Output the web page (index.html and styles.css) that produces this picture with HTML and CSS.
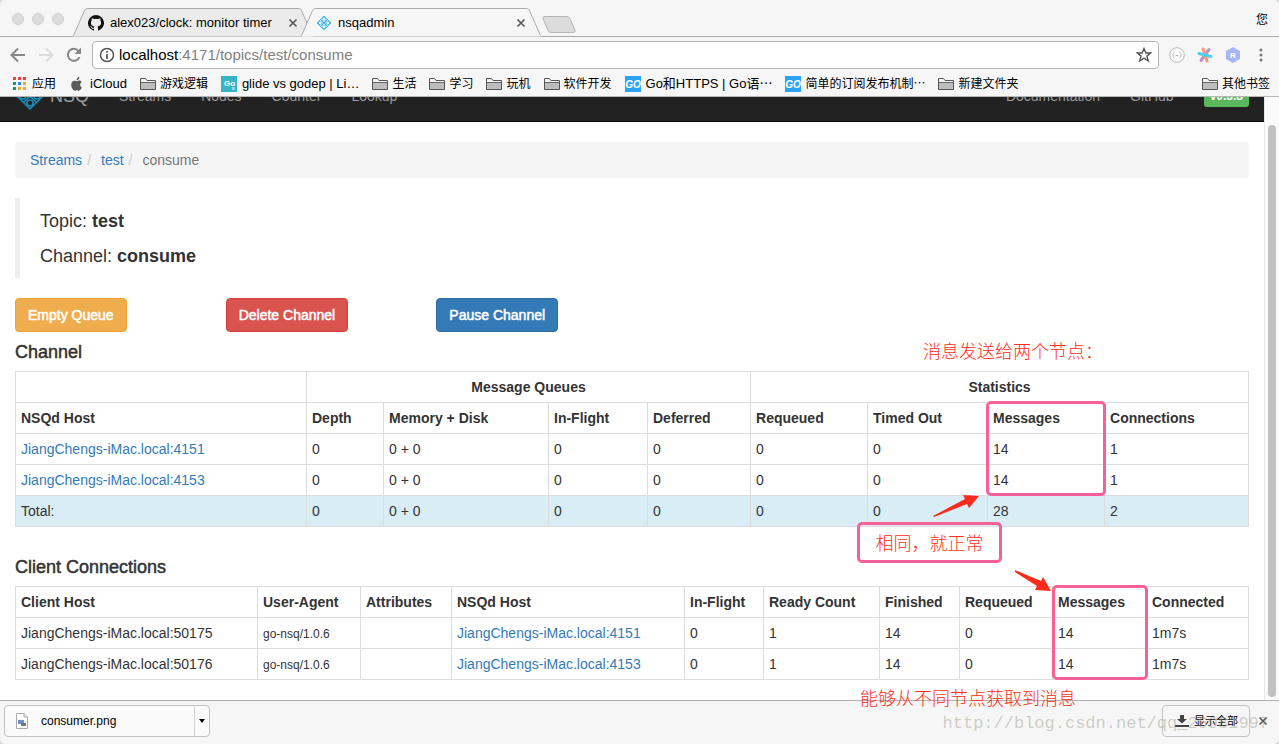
FILE: index.html
```html
<!DOCTYPE html>
<html lang="zh-CN">
<head>
  <meta charset="UTF-8" />
  <meta name="viewport" content="width=device-width, initial-scale=1.0"/>
  <title>nsqadmin</title>
  <link rel="stylesheet" href="styles.css">
</head>
<body>
  <!-- shared icons -->
  <svg class="sprite" aria-hidden="true">
    <symbol id="folder" viewBox="0 0 16 16">
      <path d="M.5 13.500V2.500H5.500L7 4.500H15.500V13.500Z" fill="#f4f4f4" stroke="#555"/>
      <path d="M1 6.500H15V13H1Z" fill="#bdbdbd"/>
      <path d="M1 6.500H15" stroke="#666"/>
    </symbol>
    <symbol id="nsq" viewBox="0 0 16 16">
      <path d="M8 1L15 8L8 15L1 8ZM4.500 4.500L11.500 11.500M11.500 4.500L4.500 11.500M1 8H15" fill="none" stroke="#3db8ea" stroke-width="1"/>
      <g fill="#fff" stroke="#5cc8f2"><circle cx="8" cy="4.200" r="1.800"/><circle cx="4.200" cy="8" r="1.800"/><circle cx="11.800" cy="8" r="1.800"/><circle cx="8" cy="11.800" r="1.800"/></g>
    </symbol>
    <symbol id="close" viewBox="0 0 10 10">
      <path d="M1.500 1.500L8.500 8.500M8.500 1.500L1.500 8.500" stroke="#5a5a5a" stroke-width="1.700"/>
    </symbol>
    <symbol id="tab-shape" viewBox="0 0 242 37">
      <path d="M0 36.500C1 36.500 1.500 35.500 2 34.500L12.500 10.500Q13.500 8.500 15.500 8.500H226.500Q228.500 8.500 229.500 10.500L240 34.500C240.500 35.500 241 36.500 242 36.500"/>
    </symbol>
  </svg>

  <div class="window">
    <div class="tabstrip">
      <div class="lights"><i></i><i></i><i></i></div>
      <div class="tab">
        <svg class="tab-bg"><use href="#tab-shape"/></svg>
        <svg class="favicon" viewBox="0 0 16 16"><path fill="#111" d="M8 0a8 8 0 0 0-2.530 15.590c.4.070.55-.17.550-.38v-1.490c-2.230.48-2.700-.95-2.700-.95-.36-.92-.89-1.170-.89-1.170-.73-.5.060-.49.060-.49.800.060 1.230.83 1.230.83.710 1.220 1.870.87 2.330.66.070-.52.280-.87.510-1.070-1.780-.2-3.640-.89-3.640-3.950 0-.87.310-1.590.820-2.150-.08-.2-.36-1.020.080-2.120 0 0 .67-.21 2.200.82a7.600 7.600 0 0 1 4 0c1.530-1.040 2.200-.82 2.200-.82.440 1.100.160 1.920.080 2.120.510.560.820 1.270.820 2.150 0 3.070-1.870 3.750-3.650 3.950.290.250.540.730.540 1.480v2.190c0 .21.150.46.550.38A8 8 0 0 0 8 0"/></svg>
        <span class="tab-title">alex023/clock: monitor timer</span>
        <button class="tab-close" aria-label="关闭"><svg><use href="#close"/></svg></button>
      </div>
      <div class="tab active">
        <svg class="tab-bg"><use href="#tab-shape"/></svg>
        <svg class="favicon"><use href="#nsq"/></svg>
        <span class="tab-title">nsqadmin</span>
        <button class="tab-close" aria-label="关闭"><svg><use href="#close"/></svg></button>
      </div>
      <button class="new-tab" aria-label="新标签页"><svg viewBox="0 0 34 17"><path d="M3 .5H25Q27 .5 28 2.500L33 14.500Q33.500 16.500 31.500 16.500H9Q7 16.500 6 14.500L1 2.500Q.5 .5 3 .5Z" fill="#dcdcdc" stroke="#b5b5b5"/></svg></button>
      <button class="profile">您</button>
    </div>

    <div class="toolbar">
      <button class="tool" aria-label="后退"><svg viewBox="0 0 16 16"><path d="M15 8H2M8 1.500L1.500 8L8 14.500" fill="none" stroke="#888" stroke-width="2"/></svg></button>
      <button class="tool" aria-label="前进"><svg viewBox="0 0 16 16"><path d="M1 8H14M8 1.500L14.500 8L8 14.500" fill="none" stroke="#dcdcdc" stroke-width="2"/></svg></button>
      <button class="tool" aria-label="重新加载"><svg viewBox="0 0 16 16"><path d="M13.500 10A6 6 0 1 1 12.500 4" fill="none" stroke="#888" stroke-width="2"/><path d="M15 .5V7H8.500Z" fill="#888"/></svg></button>
      <div class="address">
        <svg class="info" viewBox="0 0 16 16"><circle cx="8" cy="8" r="6.500" fill="none" stroke="#555" stroke-width="1.500"/><path d="M8 7V12M8 4V5.700" stroke="#555" stroke-width="1.700"/></svg>
        <span class="url"><b>localhost</b>:4171/topics/test/consume</span>
        <svg class="star" viewBox="0 0 16 16"><path d="M8 1.500L9.900 6H14.700L10.900 9.100L12.300 14L8 11.200L3.700 14L5.100 9.100L1.300 6H6.100Z" fill="none" stroke="#555" stroke-width="1.400"/></svg>
      </div>
      <div class="extensions">
        <svg viewBox="0 0 16 16"><circle cx="8" cy="8" r="7.300" fill="#fcfcfc" stroke="#bbb"/><path d="M5.500 5Q4.500 5 4.500 6.500T3.500 8Q4.500 8 4.500 9.500T5.500 11M10.500 5Q11.500 5 11.500 6.500T12.500 8Q11.500 8 11.500 9.500T10.500 11M6.500 8.500H9.500" fill="none" stroke="#bbb"/></svg>
        <svg viewBox="0 0 16 16" stroke-width="3" stroke-linecap="round"><path d="M12 2.500L4 13.500" stroke="#b894cf"/><path d="M6 2L10 14" stroke="#ff9b71"/><path d="M2 6.500L14 9.500" stroke="#4fd0ee"/></svg>
        <svg viewBox="0 0 16 16"><path d="M8 0L15 4V12L8 16L1 12V4Z" fill="#a9b4f4"/><text x="8" y="11" text-anchor="middle" class="ext-letter">R</text></svg>
        <svg viewBox="0 0 16 16" fill="#777"><circle cx="8" cy="3" r="1.500"/><circle cx="8" cy="8" r="1.500"/><circle cx="8" cy="13" r="1.500"/></svg>
      </div>
    </div>

    <nav class="bookmarks">
      <a href="#" class="apps"><svg viewBox="0 0 14 14"><path fill="#ea4335" d="M0 0h3v3H0zM5 0h3v3H5zM10 0h3v3h-3z"/><path fill="#129c57" d="M0 5h3v3H0zM0 10h3v3H0z"/><path fill="#2f86f0" d="M5 5h3v3H5z"/><path fill="#f9a72b" d="M10 5h3v3h-3zM5 10h3v3H5zM10 10h3v3h-3z"/></svg>应用</a>
      <a href="#" class="latin"><svg viewBox="0 0 16 16"><path fill="#5a5a5a" d="M10.500 1C10.600 2.800 9 4.300 7.600 4.200C7.400 2.600 9 1.100 10.500 1ZM12.900 11.300C12.300 12.900 11.100 14.700 10 14.700C9.200 14.700 8.900 14.200 7.900 14.200S6.600 14.700 5.800 14.700C4.300 14.700 2.200 11.600 2.200 8.700C2.200 6 3.900 4.700 5.500 4.700C6.500 4.700 7.300 5.300 7.900 5.300S9.500 4.600 10.700 4.600C11.500 4.700 12.300 5.100 12.800 5.900C10.500 7.200 10.900 10.500 12.900 11.300Z"/></svg>iCloud</a>
      <a href="#"><svg><use href="#folder"/></svg>游戏逻辑</a>
      <a href="#" class="latin"><svg viewBox="0 0 16 16"><path d="M0 0H16V16H0Z" fill="#38b4c9"/><path d="M11 11h3v3h-3z" fill="#83d5e2"/><text x="3" y="10" class="go-letter">Go</text></svg>glide vs godep | Li…</a>
      <a href="#"><svg><use href="#folder"/></svg>生活</a>
      <a href="#"><svg><use href="#folder"/></svg>学习</a>
      <a href="#"><svg><use href="#folder"/></svg>玩机</a>
      <a href="#"><svg><use href="#folder"/></svg>软件开发</a>
      <a href="#" class="latin"><svg viewBox="0 0 16 16"><path d="M0 0H16V16H0Z" fill="#2ba4f5"/><text x="8" y="12" text-anchor="middle" class="go-big">GO</text></svg>Go和HTTPS | Go语⋯</a>
      <a href="#"><svg viewBox="0 0 16 16"><path d="M0 0H16V16H0Z" fill="#2ba4f5"/><text x="8" y="12" text-anchor="middle" class="go-big">GO</text></svg>简单的订阅发布机制⋯</a>
      <a href="#"><svg><use href="#folder"/></svg>新建文件夹</a>
      <a href="#" class="other"><svg><use href="#folder"/></svg>其他书签</a>
    </nav>

    <div class="viewport">
      <div class="page">
        <nav class="navbar">
          <a href="#" class="brand">
            <svg viewBox="0 0 30 30"><path d="M15 2L28 15L15 28L2 15ZM8.500 8.500L21.500 21.500M21.500 8.500L8.500 21.500" fill="none" stroke="#1c8fc0" stroke-width="1.500"/><g fill="#222" stroke="#1c8fc0" stroke-width="1.500"><circle cx="15" cy="8" r="3"/><circle cx="8" cy="15" r="3"/><circle cx="22" cy="15" r="3"/><circle cx="15" cy="22" r="3"/></g></svg>
            NSQ
          </a>
          <a href="#">Streams</a>
          <a href="#">Nodes</a>
          <a href="#">Counter</a>
          <a href="#">Lookup</a>
          <a href="#" class="push">Documentation</a>
          <a href="#">GitHub</a>
          <span class="version">v0.3.8</span>
        </nav>

        <main class="container">
          <ol class="breadcrumb">
            <li><a href="#">Streams</a></li>
            <li><a href="#">test</a></li>
            <li class="current">consume</li>
          </ol>

          <blockquote>
            <p>Topic: <strong>test</strong></p>
            <p>Channel: <strong>consume</strong></p>
          </blockquote>

          <div class="actions">
            <div><button class="btn btn-warning">Empty Queue</button></div>
            <div><button class="btn btn-danger">Delete Channel</button></div>
            <div><button class="btn btn-primary">Pause Channel</button></div>
          </div>

          <h4>Channel</h4>
          <table class="channel-table">
            <colgroup><col><col><col><col><col><col><col><col><col></colgroup>
            <thead>
              <tr><th></th><th colspan="4" class="center">Message Queues</th><th colspan="4" class="center">Statistics</th></tr>
              <tr><th>NSQd Host</th><th>Depth</th><th>Memory + Disk</th><th>In-Flight</th><th>Deferred</th><th>Requeued</th><th>Timed Out</th><th>Messages</th><th>Connections</th></tr>
            </thead>
            <tbody>
              <tr><td><a href="#">JiangChengs-iMac.local:4151</a></td><td>0</td><td>0 + 0</td><td>0</td><td>0</td><td>0</td><td>0</td><td>14</td><td>1</td></tr>
              <tr><td><a href="#">JiangChengs-iMac.local:4153</a></td><td>0</td><td>0 + 0</td><td>0</td><td>0</td><td>0</td><td>0</td><td>14</td><td>1</td></tr>
              <tr class="total"><td>Total:</td><td>0</td><td>0 + 0</td><td>0</td><td>0</td><td>0</td><td>0</td><td>28</td><td>2</td></tr>
            </tbody>
          </table>

          <h4>Client Connections</h4>
          <table class="client-table">
            <colgroup><col><col><col><col><col><col><col><col><col><col></colgroup>
            <thead>
              <tr><th>Client Host</th><th>User-Agent</th><th>Attributes</th><th>NSQd Host</th><th>In-Flight</th><th>Ready Count</th><th>Finished</th><th>Requeued</th><th>Messages</th><th>Connected</th></tr>
            </thead>
            <tbody>
              <tr><td>JiangChengs-iMac.local:50175</td><td><small>go-nsq/1.0.6</small></td><td></td><td><a href="#">JiangChengs-iMac.local:4151</a></td><td>0</td><td>1</td><td>14</td><td>0</td><td>14</td><td>1m7s</td></tr>
              <tr><td>JiangChengs-iMac.local:50176</td><td><small>go-nsq/1.0.6</small></td><td></td><td><a href="#">JiangChengs-iMac.local:4153</a></td><td>0</td><td>1</td><td>14</td><td>0</td><td>14</td><td>1m7s</td></tr>
            </tbody>
          </table>
        </main>
      </div>
      <div class="scrollbar"><div class="thumb"></div></div>
    </div>

    <footer class="downloads">
      <div class="download">
        <button class="download-file">
          <svg viewBox="0 0 12 16"><path d="M.5 .5H8L11.500 4V15.500H.5Z" fill="#fff" stroke="#aaa"/><path d="M8 .5V4H11.500" fill="#eee" stroke="#aaa"/><path d="M2 7H8V11H2Z" fill="#6e91c8"/><path d="M5 10H10V13H5Z" fill="#777"/></svg>
          consumer.png
        </button>
        <button class="download-menu" aria-label="更多"><svg viewBox="0 0 6 4"><path d="M0 0H6L3 4Z"/></svg></button>
      </div>
      <button class="show-all"><svg viewBox="0 0 14 14"><path d="M5 1H9V5H12L7 9.500L2 5H5Z" fill="#444"/><path d="M0 12H14" stroke="#444" stroke-width="2"/></svg>显示全部</button>
      <button class="bar-close" aria-label="关闭"><svg><use href="#close"/></svg></button>
    </footer>

    <!-- notes drawn over the page -->
    <div class="notes">
      <div class="note note-sent">消息发送给两个节点：</div>
      <div class="mark mark-channel"></div>
      <div class="mark mark-same note">相同，就正常</div>
      <div class="mark mark-client"></div>
      <div class="note note-received">能够从不同节点获取到消息</div>
      <svg class="arrow arrow-up" viewBox="0 0 48 24"><path d="M1 22L33 5L31 1L47 2L37 14L35 10L2 23Z"/></svg>
      <svg class="arrow arrow-down" viewBox="0 0 38 22"><path d="M1 0L27 11L29 7L37 21L21 20L23 16L1 2Z"/></svg>
      <div class="watermark">http://blog.csdn.net/qq_26981997</div>
    </div>
  </div>
</body>
</html>
```

FILE: styles.css
```css
* {
  box-sizing: border-box;
}
body {
  margin: 0;
  background: #d8d8d8;
  font-family: "Liberation Sans", "Noto Sans CJK SC", sans-serif;
  font-size: 14px;
  line-height: 20px;
  color: #333;
}
a {
  color: #337ab7;
  text-decoration: none;
}
button {
  font: inherit;
  color: inherit;
  background: none;
  border: 0;
  padding: 0;
}
svg {
  display: block;
  flex: none;
}
.sprite {
  position: absolute;
  width: 0;
  height: 0;
}
.window {
  position: relative;
  display: flex;
  flex-direction: column;
  height: 100vh;
  background: #f6f6f6;
  border-radius: 5px;
  overflow: hidden;
}

/* tabs */
.tabstrip {
  display: flex;
  height: 37px;
  flex: none;
  font-size: 13px;
  color: #000;
  box-shadow: inset 0 -1px #aaa;
}
.lights {
  display: flex;
  gap: 8px;
  padding: 13px 8px 0 12px;
}
.lights i {
  width: 12px;
  height: 12px;
  border-radius: 50%;
  background: #dcdcdc;
  border: 1px solid #cfcfcf;
}
.tab {
  position: relative;
  display: flex;
  align-items: center;
  width: 242px;
  padding: 9px 16px 0;
}
.tab + .tab {
  margin-left: -14px;
}
.tab-bg {
  position: absolute;
  left: 0;
  top: 0;
  width: 242px;
  height: 37px;
  fill: #ebebeb;
  stroke: #aaa;
}
.tab.active .tab-bg {
  fill: #f6f6f6;
}
.favicon {
  position: relative;
  width: 16px;
  height: 16px;
  margin-right: 6px;
}
.tab-title {
  position: relative;
  flex: 1;
  white-space: nowrap;
}
.tab-close {
  position: relative;
}
.tab-close svg,
.bar-close svg {
  width: 10px;
  height: 10px;
}
.new-tab svg {
  width: 34px;
  height: 17px;
}
.new-tab {
  margin-top: 11px;
}
.profile {
  margin-left: auto;
  padding: 2px 11px 0 0;
  font-size: 12px;
}

/* address row */
.toolbar {
  display: flex;
  align-items: center;
  flex: none;
  height: 36px;
  padding: 0 10px;
}
.tool {
  width: 28px;
}
.tool svg {
  width: 16px;
  height: 16px;
}
.address {
  display: flex;
  align-items: center;
  flex: 1;
  height: 28px;
  margin: 0 10px 0 -2px;
  padding: 0 6px;
  background: #fff;
  border: 1px solid #b5b5b5;
  border-radius: 4px;
}
.info,
.star {
  width: 16px;
  height: 16px;
}
.url {
  flex: 1;
  padding-left: 4px;
  font-size: 15px;
  color: #808080;
}
.url b {
  font-weight: normal;
  color: #000;
}
.extensions {
  display: flex;
  gap: 12px;
}
.extensions svg {
  width: 16px;
  height: 16px;
}
.ext-letter {
  font-size: 8px;
  font-weight: bold;
  fill: #fff;
}

/* bookmarks */
.bookmarks {
  display: flex;
  align-items: center;
  flex: none;
  gap: 13px;
  height: 24px;
  padding: 0 9px 3px 13px;
  border-bottom: 1px solid #b6b6b6;
  font-size: 12px;
  white-space: nowrap;
}
.bookmarks a {
  display: flex;
  align-items: center;
  gap: 4px;
  padding-top: 2px;
  color: #000;
}
.bookmarks svg {
  width: 16px;
  height: 16px;
}
.bookmarks .apps svg {
  width: 14px;
  height: 14px;
}
.bookmarks .apps {
  gap: 5px;
}
.bookmarks .latin {
  gap: 5px;
  font-size: 13px;
}
.bookmarks .other {
  margin-left: auto;
}
.go-letter {
  font-size: 8px;
  font-weight: bold;
  fill: #fff;
}
.go-big {
  font-size: 10px;
  font-style: italic;
  font-weight: bold;
  fill: #fff;
}

/* web page, scrolled down a little */
.viewport {
  display: flex;
  flex: 1;
  min-height: 0;
  background: #fff;
  overflow: hidden;
}
.page {
  flex: 1;
  margin-top: -26px;
}
.navbar {
  display: flex;
  align-items: center;
  gap: 30px;
  height: 51px;
  padding: 0 15px;
  background: #222;
  border-bottom: 1px solid #080808;
}
.navbar a {
  color: #9d9d9d;
}
.navbar .brand {
  display: flex;
  align-items: center;
  gap: 5px;
  font-size: 18px;
}
.brand svg {
  width: 30px;
  height: 30px;
}
.navbar .push {
  margin-left: auto;
}
.version {
  padding: 1px 6px;
  border-radius: 3px;
  background: #5cb85c;
  color: #fff;
  font-size: 12px;
  font-weight: bold;
}
.container {
  padding: 20px 15px 0;
}
.breadcrumb {
  display: flex;
  margin: 0 0 20px;
  padding: 8px 15px;
  list-style: none;
  background: #f5f5f5;
  border-radius: 4px;
}
.breadcrumb li + li::before {
  content: "/";
  padding: 0 10px 0 5px;
  color: #ccc;
}
.breadcrumb .current {
  color: #777;
}
blockquote {
  margin: 0 0 20px;
  padding: 11px 20px 9px;
  border-left: 5px solid #eee;
  font-size: 18px;
  line-height: 25px;
}
blockquote p {
  margin: 0 0 10px;
}
blockquote p:last-child {
  margin: 0;
}
.actions {
  display: grid;
  grid-template-columns: repeat(6, 1fr);
  margin-right: -30px;
}
.btn {
  height: 34px;
  padding: 0 12px;
  border: 1px solid;
  border-radius: 4px;
  color: #fff;
  -webkit-text-stroke: 0.5px #fff;
}
.btn-warning {
  background: #f0ad4e;
  border-color: #eea236;
}
.btn-danger {
  background: #d9534f;
  border-color: #d43f3a;
}
.btn-primary {
  background: #337ab7;
  border-color: #2e6da4;
}
h4 {
  margin: 10px 0 8px;
  font-size: 18px;
  line-height: 21px;
  font-weight: normal;
  -webkit-text-stroke: 0.5px #333;
}
table {
  width: 100%;
  margin-bottom: 30px;
  table-layout: fixed;
  border-collapse: collapse;
}
th,
td {
  height: 31px;
  padding: 5px;
  border: 1px solid #ddd;
  text-align: left;
  white-space: nowrap;
}
th.center {
  text-align: center;
}
small {
  font-size: 12px;
  line-height: 16px;
}
.total td {
  background: #d9edf7;
}
.channel-table col:nth-child(1) { width: 291px; }
.channel-table col:nth-child(2) { width: 77px; }
.channel-table col:nth-child(3) { width: 165px; }
.channel-table col:nth-child(4) { width: 99px; }
.channel-table col:nth-child(5) { width: 103px; }
.channel-table col:nth-child(6) { width: 117px; }
.channel-table col:nth-child(7) { width: 120px; }
.channel-table col:nth-child(8) { width: 117px; }
.channel-table col:nth-child(9) { width: 144px; }
.client-table col:nth-child(1) { width: 242px; }
.client-table col:nth-child(2) { width: 103px; }
.client-table col:nth-child(3) { width: 91px; }
.client-table col:nth-child(4) { width: 233px; }
.client-table col:nth-child(5) { width: 79px; }
.client-table col:nth-child(6) { width: 116px; }
.client-table col:nth-child(7) { width: 80px; }
.client-table col:nth-child(8) { width: 93px; }
.client-table col:nth-child(9) { width: 94px; }
.client-table col:nth-child(10) { width: 102px; }

.scrollbar {
  width: 15px;
  padding: 28px 3px 3px;
  background: #fafafa;
  border-left: 1px solid #e8e8e8;
}
.thumb {
  height: 100%;
  border-radius: 4px;
  background: #c1c1c1;
}

/* download bar */
.downloads {
  display: flex;
  align-items: center;
  flex: none;
  height: 44px;
  padding: 0 11px 3px 4px;
  border-top: 1px solid #b0b0b0;
  color: #000;
}
.download {
  display: flex;
  width: 206px;
  height: 32px;
  border: 1px solid #c2c2c2;
  border-radius: 4px;
  background: #fafafa;
  font-size: 12px;
}
.download-file {
  display: flex;
  flex: 1;
  align-items: center;
  gap: 13px;
  padding-left: 11px;
}
.download-file svg {
  width: 12px;
  height: 16px;
}
.download-menu {
  padding: 0 4px;
  border-left: 1px solid #d0d0d0;
}
.download-menu svg {
  width: 6px;
  height: 4px;
}
.show-all {
  display: flex;
  align-items: center;
  gap: 5px;
  height: 32px;
  margin-left: auto;
  padding: 0 11px 0 12px;
  border: 1px solid #c2c2c2;
  border-radius: 4px;
  font-size: 11px;
}
.show-all svg {
  width: 14px;
  height: 14px;
}
.bar-close {
  margin-left: 8px;
}

/* notes */
.notes {
  position: absolute;
  inset: 0;
  pointer-events: none;
}
.note {
  position: absolute;
  font-size: 18px;
  line-height: 26px;
  color: #ff2d20;
  white-space: nowrap;
  font-weight: 300;
}
.note-sent {
  right: 176px;
  top: 339px;
}
.note-received {
  right: 203px;
  top: 686px;
}
.mark {
  position: absolute;
  border: 3px solid #fb5f97;
  border-radius: 5px;
}
.mark-channel {
  right: 173px;
  top: 401px;
  width: 120px;
  height: 95px;
}
.mark-same {
  right: 277px;
  top: 522px;
  width: 145px;
  height: 41px;
  line-height: 38px;
  text-align: center;
}
.mark-client {
  right: 131px;
  top: 585px;
  width: 96px;
  height: 95px;
}
.arrow {
  position: absolute;
  fill: #ff2a1c;
}
.arrow-up {
  right: 299px;
  top: 494px;
  width: 48px;
  height: 24px;
}
.arrow-down {
  right: 227px;
  top: 570px;
  width: 38px;
  height: 22px;
}
.watermark {
  position: absolute;
  right: 10px;
  top: 714px;
  font-family: "Liberation Mono", monospace;
  font-size: 17px;
  color: rgba(150, 150, 140, 0.45);
}
```
